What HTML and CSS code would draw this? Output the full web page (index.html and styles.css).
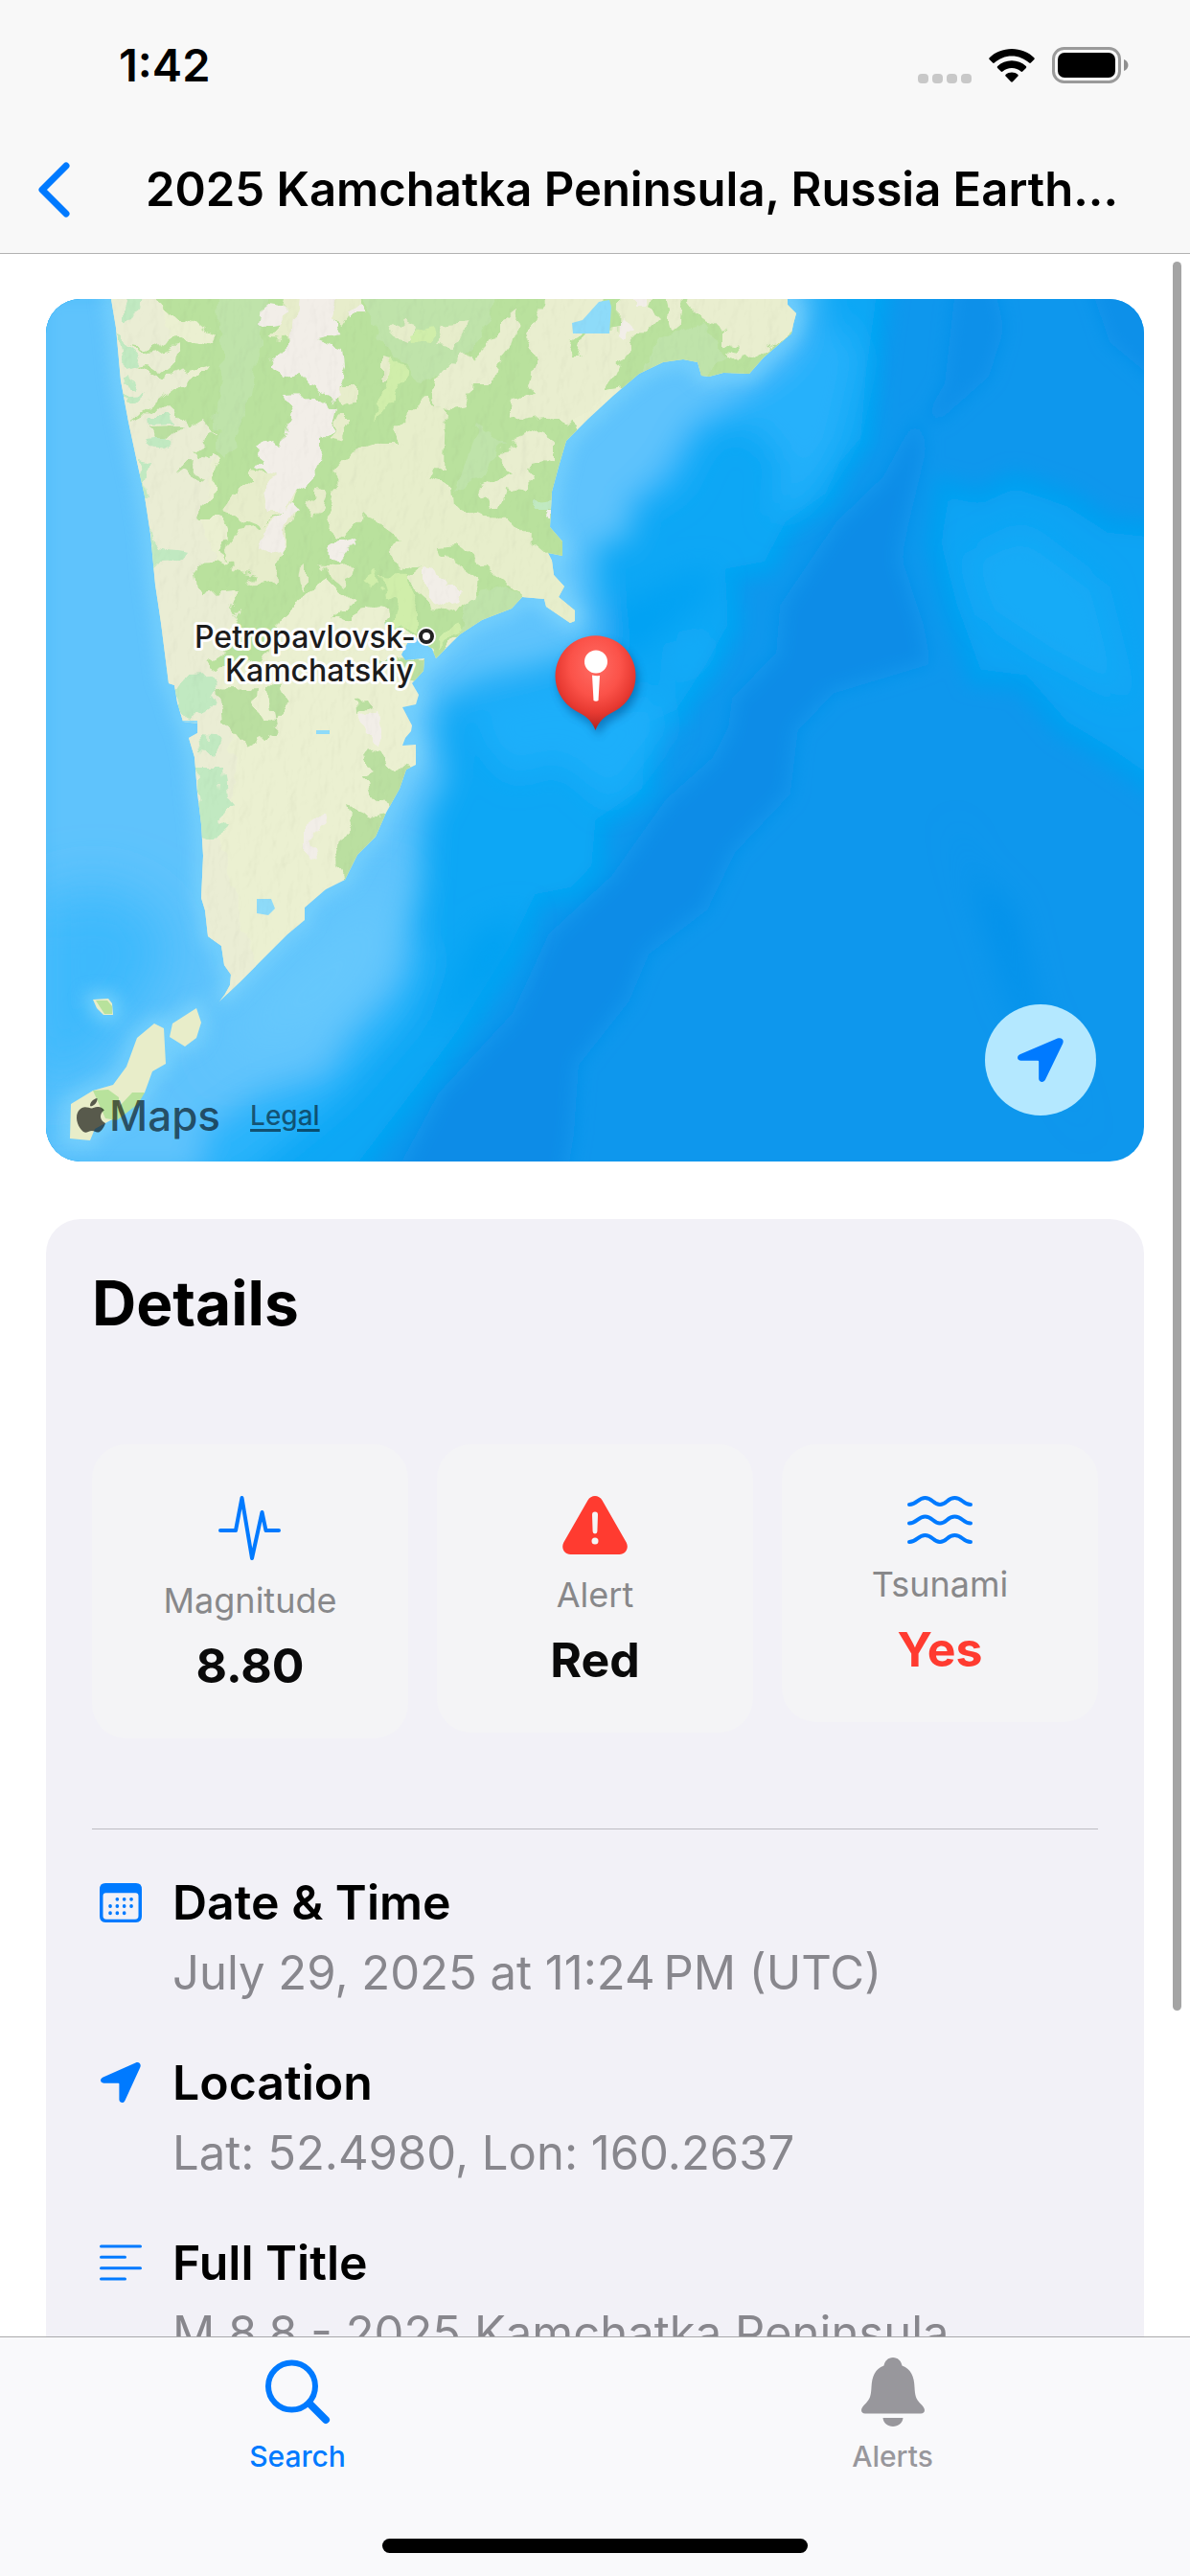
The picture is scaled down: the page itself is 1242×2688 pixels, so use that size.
FILE: index.html
```html
<!DOCTYPE html>
<html lang="en">
<head>
<meta charset="utf-8">
<meta name="viewport" content="width=device-width, initial-scale=1">
<title>2025 Kamchatka Peninsula, Russia Earthquake</title>
<link rel="stylesheet" href="styles.css">
</head>
<body>
<div class="app">
  <header class="top">
    <div class="status">
      <span class="clock">1:42</span>
      <div class="indicators">
        <svg width="56" height="10" viewBox="0 0 56 10" fill="#c8c8c8" aria-hidden="true"><rect width="11" height="10" rx="4"/><rect x="15" width="11" height="10" rx="4"/><rect x="30" width="11" height="10" rx="4"/><rect x="45" width="11" height="10" rx="4"/></svg>
        <svg class="wifi" width="48" height="36" viewBox="0 0 48 36" aria-hidden="true"><path d="M24 0C33 0 41.500 3.500 47.300 9.200c.6.6.6 1.300.1 1.900l-3.500 3.500c-.5.500-1.200.500-1.800 0C37.300 10 31 7.400 24 7.400S10.700 10 5.900 14.600c-.6.500-1.300.500-1.800 0L.6 11.100c-.5-.6-.5-1.300.1-1.900C6.500 3.500 15 0 24 0Z"/><path d="M24 12.300c5.700 0 10.900 2.200 14.800 5.700.6.600.6 1.300.1 1.900l-3.600 3.600c-.5.500-1.200.5-1.800 0-2.500-2.200-5.800-3.600-9.500-3.600s-7 1.400-9.500 3.600c-.6.500-1.300.5-1.800 0l-3.600-3.600c-.5-.6-.5-1.300.1-1.900 3.900-3.500 9.100-5.700 14.800-5.700Z"/><path d="M24 24.400c2.400 0 4.600.9 6.300 2.300.6.500.6 1.300.1 1.900l-5.500 5.700c-.5.600-1.300.6-1.800 0l-5.500-5.700c-.5-.6-.5-1.400.1-1.900 1.700-1.400 3.900-2.300 6.300-2.300Z"/></svg>
        <svg width="80" height="38" viewBox="0 0 80 38" aria-hidden="true"><rect x="1.500" y="1.500" width="69" height="35" rx="11" fill="none" stroke="#9a9a9a" stroke-width="3"/><rect x="6" y="6" width="60" height="26" rx="7"/><path d="M75 13c3 1 4.500 3.500 4.500 6s-1.500 5-4.500 6Z" fill="#8f8f8f"/></svg>
      </div>
    </div>
    <div class="navbar">
      <button class="back" aria-label="Back"><svg width="34" height="58" viewBox="0 0 34 58" fill="none" stroke="#007aff" stroke-width="7" stroke-linecap="round" stroke-linejoin="round" aria-hidden="true"><path d="M30 4 5 29l25 25"/></svg></button>
      <h1>2025 Kamchatka Peninsula, Russia Earth...</h1>
    </div>
  </header>

  <main class="content">
    <section class="map" aria-label="Map">
      <svg class="map-art" viewBox="0 0 1146 900" preserveAspectRatio="xMidYMid slice" aria-hidden="true">
        <defs>
          <filter id="soft" x="-20%" y="-20%" width="140%" height="140%"><feGaussianBlur stdDeviation="9"/></filter>
          <filter id="softer" x="-20%" y="-20%" width="140%" height="140%"><feGaussianBlur stdDeviation="16"/></filter>
          <filter id="wide" x="-40%" y="-40%" width="180%" height="180%"><feGaussianBlur stdDeviation="28"/></filter>
          <filter id="shadow" x="-50%" y="-50%" width="200%" height="200%"><feGaussianBlur stdDeviation="5"/></filter>
          <filter id="ragged" filterUnits="userSpaceOnUse" x="0" y="-20" width="850" height="800">
            <feTurbulence type="fractalNoise" baseFrequency="0.06" numOctaves="2" seed="9" result="n"/>
            <feDisplacementMap in="SourceGraphic" in2="n" scale="20" xChannelSelector="R" yChannelSelector="G"/>
          </filter>
          <filter id="relief" x="0" y="0" width="100%" height="100%">
            <feTurbulence type="fractalNoise" baseFrequency="0.07 0.04" numOctaves="3" seed="4" result="n"/>
            <feDiffuseLighting in="n" surfaceScale="3" diffuseConstant="1.100" lighting-color="#fff" result="l"><feDistantLight azimuth="215" elevation="62"/></feDiffuseLighting>
          </filter>
          <radialGradient id="pinfill" cx="0.5" cy="0.320" r="0.700"><stop offset="0" stop-color="#ff6c64"/><stop offset="0.450" stop-color="#fb5249"/><stop offset="0.700" stop-color="#e83a32"/><stop offset="1" stop-color="#ab201e"/></radialGradient>
          <path id="landshape" d="M68-20V0l5 30 5 55 8 43 9 42 8 36 6 39 5 53 6 40 8 63 6 2 3 18 6 20 15 2v10l-9 5 6 20 3 37 4 33 2 33-2 44 4 13 3 27 14 10 3 20 7 10-1 11-5 9-6 8 21-20 20-20 30-30 18-15v-13l22-19 20-10 13-26 19-19 11-25 14-25 7-20 10-5v-21l-14 1 3-8 6-7 1-6-10-19 14-3 3-10-7-12 12-13 1-13-20 2-4-6 11-21 21 15 4 10 25-25 23-15 31-12 11-12 23 2 2 8 25 17 5-2v-11l-17-14 6-11-11-12-2-15-4-8 15 3v-15l-13-15 2-37 7-26 8-27 23-23 26-24 27-23 25-12 21-3 15 3 4 14 8 1 15-4 27 1 15-17 29-25 2-10 3-11-9-9-1-26Z"/>
          <path id="isles" d="M157 740l5 15-5 16-12 9-16-10 3-14ZM113 756l10 5 2 37-14 8-8 22-19 20-33 18-5 12-21-2 1-36 23-14 21-6 14-19 11-30ZM49 731l16-1 4 5 1 12H60l-7-7Z"/>
          <clipPath id="landclip"><use href="#landshape"/></clipPath>
        </defs>
        <rect width="1146" height="900" fill="#0e97ed"/>
        <g filter="url(#soft)">
          <path d="M-20-20H877L864 75 858 148 835 175 820 208 778 238 755 281 717 288 720 341 694 388 663 435 634 448 630 515 581 548 577 595 552 621 516 628 490 681 436 768 394 825 321 920H-20Z" fill="#0fa7f5" stroke="#00a1f1" stroke-width="16"/>
          <path d="M935 195 973 205 1011 188 1069 208 1111 235 1170 241V520L1105 475 1060 448 1019 401 969 395 942 321 925 255Z" fill="#0ba4f4" stroke="#039eef" stroke-width="18"/>
          <path d="M908 131 915 155 896 235 889 271 912 341 919 378 820 408 781 448 773 515 716 575 687 635 626 681 605 731 552 798 547 871 539 920H365L413 831 490 748 528 665 593 605 650 525 699 481 716 448 720 418 766 371 770 321 797 281 828 235 877 188Z" fill="#0d8ce7" stroke="#0c93ea" stroke-width="8"/>
          <path d="M950-20H988L1000 31 984 81 931 128 919 121 938 88ZM1088-20H1170V95L1110 45Z" fill="#0b90e9"/>
        </g>
        <g filter="url(#softer)">
          <path d="M960 270 1020 240 1100 300 1130 420 1040 370 980 330Z" fill="#12abf7"/>
          <path d="M945 540 970 600 1010 640 1030 730 1090 880 1050 790 1010 740 985 660Z" fill="#0491ea"/>
          <path d="M600 90 750 70 830 20 850 60 830 150 790 210 760 230 770 170 735 130 690 140 660 200 600 230Z" fill="#27b1fb"/>
          <path d="M440 420 540 400 600 420 640 410 650 450 590 530 560 500 530 480 490 500 460 470Z" fill="#1eaffa"/>
          <path d="M580 330 690 280 700 300 640 350 610 380 590 360Z" fill="#04a1f3"/>
          <path d="M660 360 700 350 680 380 650 400Z" fill="#1caefa"/>
          <path d="M450 660 500 640 480 700 440 740 400 770Z" fill="#00a1f2"/>
          <path d="M300 760 390 660 400 690 380 750 310 830 200 920H130L200 820Z" fill="#2cb4fb"/>
          <path d="M-20-20H810L795 31 770 65 710 108 672 128 645 175 620 200 605 210 612 250 572 255 575 321 580 365 512 385 451 398 409 421 409 468 417 498 394 541 390 615 375 661 359 715 310 765 292 805 222 825 164 865 157 920H-20Z" fill="#5fc3fc"/>
        </g>
        <g filter="url(#wide)">
          <path d="M-20 630 60 610 120 640 130 700 80 760 30 820-20 820Z" fill="#3db9fc"/>
          <path d="M280 680 360 600 360 680 290 760 180 800 220 730Z" fill="#67c9fc"/>
        </g>
        <g filter="url(#soft)" fill="none" stroke="#86d9fd" stroke-width="14" opacity="0.700"><use href="#landshape"/><use href="#isles"/></g>
        <use href="#landshape" fill="#e9eecb"/>
        <g clip-path="url(#landclip)">
          <g filter="url(#ragged)">
            <path fill="#eaedd4" d="M60 0H115L180 150 160 230 200 330 180 400 200 480 180 560 230 730H150Z"/>
            <path fill="#b9e19d" d="M111-20V0L128 16 176 38 172 47 135 37 107 53 88 49 107 57 139 47 137 66 122 78 106 68 90 70 122 82 172 68 162 81 134 91 88 126 107 116 137 115 149 135 164 126 176 141 155 155 160 170 174 158 181 165 174 185 176 201 158 218 160 230 185 230 191 248 180 262 191 270 180 275 155 276 160 310 183 308 202 306 193 321 202 338 208 351 190 365 166 376 180 385 229 375 245 338 264 308 294 293 321 316 298 331 321 341 336 321 356 325 359 341 382 350 407 375 432 350 470 340 560 300 552 100 620 90 800 100V-20Z"/>
            <path fill="#bfe3aa" d="M180-20H235L215 100 190 170 176 150 184 80ZM320-20H480L440 60 390 90 350 40ZM450 130 480 150 455 190 430 200ZM620 80 640 40 690 25 707 60 690 80ZM440 310 480 300 500 315 430 355Z"/>
            <path fill="#e7eecb" d="M298 188 321 161 352 151 369 151 365 131 398 101 417 118 415 175 401 188 426 196 428 218 455 230 486 231 509 255 528 271 552 301 560 350 522 335 493 308 455 275 440 262 428 253 411 255 413 266 432 278 451 293 447 315 424 331 405 321 375 293 394 278 371 283 359 271 371 253 334 226 306 251 292 238 300 205Z"/>
            <path fill="#e9eecf" d="M493 10 474 25V41L459 45 447 66 434 56 415 72 401 90 413 116 438 111 443 91 465 91 470 68 486 48ZM535-20 501 38 511 61 505 88 511 100 490 105 482 128 520 121 547 131 566 121 585 95 594 76 602 58 640 18 630 8 641-20ZM644-20V0L653 33 663 25 666-20ZM671-20V0L686 21 707 30V60L724 66 743 60 780 30 800-20ZM490 145 507 138 530 151V170L501 178 507 195 501 201 480 198 474 218H461L453 198 486 181 472 168Z"/>
            <path fill="#e7edcb" d="M214 178V190L187 211 189 223 222 236 256 215 260 198 237 182ZM202 240 222 236 260 218 250 255 237 295 212 300 218 285 191 281 189 261ZM306 90H323V107L308 112ZM306 122 318 122 308 148 295 145ZM292 200 284 230 276 214 282 198ZM250-20H340L308 28 275 10 262 45 232 38 245 22ZM359 31 372 22 388 33 380 47 368 42ZM412 28 438 25 430 42 422 50 406 48ZM350 61 363 63V88H350ZM285 280 322 275 320 292 310 297 298 288ZM256 290 270 278V302Z"/>
            <path fill="#d0eeaa" d="M363 61 377 78 365 95 359 115 342 125 348 105 356 91ZM350 288 375 290 388 321V348L363 341 369 315 354 308ZM331 293 345 285 349 300 338 305ZM411 350 428 338 432 348 407 365ZM382 37 404 30 400 42 384 44Z"/>
            <path fill="#b8e29c" d="M548 40 562 32 555 60 545 60ZM576 36 585-20H600L598 32ZM707 47 724 52 720 57 707 54Z"/>
            <path fill="#f2eee8" d="M266-20H313L298 21 308 38 285 43 306 51 308 71 305 80 312 98 302 108 271 91 269 76 246 81 233 68 256 48 260 21ZM246 101 277 100 302 115 298 138 287 145V158L275 198 260 195 248 221H229L225 198 242 185 218 175 229 160 223 151 235 146 245 156 254 118ZM252 216 262 221 250 235 246 268 223 255 225 243ZM227 8 250 12 245 24 224 28ZM313 12 325 3 333 10 318 20ZM396 278 413 288 417 300H434L430 318 419 320 396 305ZM292 265 310 253 325 251 324 258 312 263 304 275ZM325 436 346 431 352 455 346 465ZM271 545 287 536 289 548 279 561 283 585 271 578ZM598 27 604 24 613 33 606 42 598 39ZM613-20H627V7H613ZM518 222 528 222V230Z"/>
            <path fill="#c1e9c1" d="M80 12 95-20H114L92 20 80 22ZM75 33 80 35 86 52 97 57 94 68 80 72 77 50ZM82 76 96 86 92 90 80 84ZM80 100 105 99 92 110 84 110ZM107 123H135L136 130 108 131ZM105 142 118 140 130 150 120 156 108 153ZM96 168 110 171 104 188 108 206 100 206ZM108 240 116 260 146 265 138 275 111 277ZM147 393 171 392 180 407 165 431 150 437 140 425 135 408ZM160 458 181 460 176 476 162 474ZM155 489H183L186 518 195 528 181 545 187 551 178 565 160 561ZM512 210 528 208V221H508Z"/>
            <path fill="#badfa0" d="M108 133 140 132 137 143 112 141ZM136 180 148 166 166 187ZM180 408 220 405 218 425 225 436 237 438 229 406 246 405 256 425 237 438 239 451 210 468 185 438ZM338 468 365 488 390 491 380 511 365 538 352 520 336 518 331 498 344 491 329 481ZM315 528 344 541 370 536 354 561 335 580 320 615 310 610 302 585 310 558 321 548ZM321 420 333 419 338 427 322 435ZM345 377 395 378 390 400 360 390Z"/>
          </g>
          <path fill="#8edbf9" d="M577 3 588 1 590 8 588 36H550L549 25 560 22ZM220 626H235L239 636 232 643 220 641ZM282 450H296V454H282ZM140 440H158V453H150Z"/>
          <rect width="800" height="740" filter="url(#relief)" opacity="0.130" style="mix-blend-mode:multiply"/>
        </g>
        <use href="#isles" fill="#e8edc9"/>
        <path fill="#b8e29c" d="M49 826 65 825 76 833V843L90 828H103L96 840 74 857 62 855ZM52 732H64L69 738V746H61Z"/>
        <g class="place">
          <text x="155" y="364">Petropavlovsk-</text>
          <text x="187" y="399">Kamchatskiy</text>
        </g>
        <circle cx="397" cy="352" r="8" fill="#fff" stroke="#fff" stroke-width="4"/>
        <circle cx="397" cy="352" r="6" fill="#fff" stroke="#222" stroke-width="4"/>
        <path d="M573.500 450C570 441 565 436 556 431.500A42 42 0 1 1 591 431.500C582 436 577 441 573.500 450Z" transform="translate(3 6)" fill="#003a78" opacity="0.450" filter="url(#shadow)"/>
        <path d="M573.500 450C570 441 565 436 556 431.500A42 42 0 1 1 591 431.500C582 436 577 441 573.500 450Z" fill="url(#pinfill)"/>
        <circle cx="574" cy="378.500" r="12" fill="#fff"/>
        <path d="M570 392.500q4 1 8 .500l-1.500 26q-2.500 1.500-5 0Z" fill="#fff"/>
      </svg>
      <div class="attribution">
        <span class="brand"><svg width="30" height="37" viewBox="0 0 30 37" aria-hidden="true"><path d="M21.500 0c.3 4.500-3.500 8.600-7.400 8.300C13.600 4.200 17.700.400 21.500 0ZM15.600 10.500c1.500 0 3.800-1.800 6.900-1.500 2.600.1 4.900 1.300 6.300 3.400-5.600 3.700-4.700 11 1.200 13.500-1.500 4.500-4.700 9.600-8.100 9.700-2.400 0-3.200-1.500-6-1.500s-3.700 1.500-6 1.600C5.500 35.800 0 27.500 0 20.400 0 13.300 4.400 9.400 8.800 9.300c2.900 0 5.300 1.200 6.800 1.200Z"/></svg>Maps</span>
        <a href="#legal">Legal</a>
      </div>
      <button class="locate" aria-label="Center on epicenter"><svg width="48" height="48" viewBox="0 0 42 40" fill="#007aff" aria-hidden="true"><path d="M36.500.4c3.500-1.300 6.300 1 4.800 4.700L25.400 38c-1.500 3.200-6 2.400-6-1V21.500c0-.6-.3-.9-.9-.9H3.300c-3.800 0-4.400-4-1.200-5.600Z"/></svg></button>
    </section>

    <section class="details">
      <h2>Details</h2>
      <div class="stats">
        <div class="stat">
          <svg width="66" height="67" viewBox="0 0 66 67" fill="none" stroke="#007aff" stroke-width="4" stroke-linecap="round" stroke-linejoin="round" aria-hidden="true"><path d="M2 36H18L24.500 2 35 65 45.500 17 49.500 36H63"/></svg>
          <span class="stat-label">Magnitude</span>
          <strong>8.80</strong>
        </div>
        <div class="stat">
          <svg width="68" height="61" viewBox="0 0 68 61" aria-hidden="true"><path d="M26.500 4.500c3.300-6 11.700-6 15 0l25.200 44c3 5.700-.5 12.500-7.200 12.500h-51c-6.700 0-10.200-6.800-7.200-12.500Z" fill="#ff3b30"/><path d="M31 19.500a3 3 0 0 1 6 0l-.6 17.500a2.400 2.400 0 0 1-4.800 0Z" fill="#f4f4f5"/><circle cx="34" cy="47" r="3.500" fill="#f4f4f5"/></svg>
          <span class="stat-label">Alert</span>
          <strong>Red</strong>
        </div>
        <div class="stat">
          <svg width="68" height="50" viewBox="0 0 68 50" fill="none" stroke="#007aff" stroke-width="4" stroke-linecap="round" aria-hidden="true"><path id="wave" d="M2 9C10 9 11 2 18.500 2S27 9 34 9 41.500 2 49.500 2 58 9 66 9"/><use href="#wave" y="19.500"/><use href="#wave" y="39"/></svg>
          <span class="stat-label">Tsunami</span>
          <strong class="alarm">Yes</strong>
        </div>
      </div>
      <hr>
      <dl class="facts">
        <div class="fact">
          <svg width="44" height="41" viewBox="0 0 44 38" preserveAspectRatio="none" fill="#007aff" aria-hidden="true"><path fill-rule="evenodd" d="M6 0H38q6 0 6 6V32q0 6-6 6H6q-6 0-6-6V6Q0 0 6 0ZM6.500 9.500Q3.500 9.500 3.500 12.500V31.500Q3.500 35 7 35H37Q40.500 35 40.500 31.500V12.500Q40.500 9.500 37.500 9.500Z"/><path d="M11 29h.1M18.300 29h.1M25.600 29h.1M11 22.300h.1M18.300 22.300h.1M25.600 22.300h.1M33 22.300h.1M18.300 15.600h.1M25.600 15.600h.1M33 15.600h.1" stroke="#007aff" stroke-width="3.600" stroke-linecap="round"/></svg>
          <dt>Date &amp; Time</dt>
          <dd>July 29, 2025 at 11:24&#8239;PM (UTC)</dd>
        </div>
        <div class="fact">
          <svg width="42" height="42" viewBox="0 0 42 40" preserveAspectRatio="none" fill="#007aff" aria-hidden="true"><path d="M36.500.4c3.500-1.300 6.300 1 4.800 4.700L25.400 38c-1.500 3.200-6 2.400-6-1V21.500c0-.6-.3-.9-.9-.9H3.300c-3.800 0-4.400-4-1.200-5.600Z"/></svg>
          <dt>Location</dt>
          <dd>Lat: 52.4980, Lon: 160.2637</dd>
        </div>
        <div class="fact">
          <svg width="44" height="38" viewBox="0 0 44 38" stroke="#007aff" stroke-width="3" stroke-linecap="round" aria-hidden="true"><path d="M1.500 2H42.500M1.500 13.300H26.500M1.500 24.700H42.500M1.500 36H26.500"/></svg>
          <dt>Full Title</dt>
          <dd>M 8.8 - 2025 Kamchatka Peninsula</dd>
        </div>
      </dl>
    </section>
    <div class="scroll-thumb"></div>
  </main>

  <footer class="bottom">
    <nav class="tabs">
      <a class="tab active" href="#search"><svg width="68" height="74" viewBox="0 0 68 74" fill="none" stroke="currentColor" aria-hidden="true"><circle cx="27.500" cy="31" r="24.500" stroke-width="6"/><path d="M46 49 63 66" stroke-width="8" stroke-linecap="round"/></svg>Search</a>
      <a class="tab" href="#alerts"><svg width="66" height="74" viewBox="0 0 66 74" fill="currentColor" aria-hidden="true"><path d="M33 1C28 1 24.500 4.500 23.500 9.500 14 13 11 21 10.500 32 10 41 9 44 5 48.500 1.500 52 0 54 0 56c0 2 1.500 3.500 4 3.500H62c2.500 0 4-1.500 4-3.500 0-2-1.500-4-5-7.500C57 44 56 41 55.500 32 55 21 52 13 42.500 9.500 41.500 4.500 38 1 33 1ZM22.500 64h21C43 69.500 38.500 73 33 73S23 69.500 22.500 64Z"/></svg>Alerts</a>
    </nav>
    <div class="home-indicator"></div>
  </footer>
</div>
</body>
</html>
```

FILE: styles.css
```css
* { box-sizing: border-box; }

body {
  margin: 0;
  background: #fff;
  color: #000;
  font-family: Inter, "Liberation Sans", sans-serif;
}

h1, h2, dl, dt, dd { margin: 0; }

button {
  padding: 0;
  border: 0;
  background: none;
}

svg { display: block; flex: none; }

.app {
  display: flex;
  flex-direction: column;
  height: 100vh;
}

/* Status bar and navigation */
.top {
  flex: none;
  background: #f8f8f8;
  border-bottom: 1px solid #b2b2b2;
}

.status {
  display: flex;
  align-items: center;
  justify-content: space-between;
  height: 132px;
  padding: 4px 64px 0 124px;
}

.clock {
  font-size: 47px;
  font-weight: 600;
  line-height: 60px;
}

.indicators {
  display: flex;
  align-items: flex-end;
  gap: 18px;
}

.navbar {
  display: flex;
  align-items: center;
  height: 132px;
  padding: 0 72px 0 39px;
}

.back {
  flex: none;
  width: 110px;
}

h1 {
  flex: 1;
  overflow: hidden;
  font-size: 49px;
  font-weight: 600;
  line-height: 60px;
  text-align: center;
  white-space: nowrap;
}

/* Scrolling content */
.content {
  position: relative;
  display: flex;
  flex: 1;
  flex-direction: column;
  gap: 60px;
  min-height: 0;
  overflow: hidden;
  padding: 47px 48px 0;
}

.scroll-thumb {
  position: absolute;
  top: 8px;
  right: 9px;
  width: 9px;
  height: 84%;
  border-radius: 5px;
  background: #a4a4a4;
}

.map {
  position: relative;
  flex: none;
  height: 900px;
  overflow: hidden;
  border-radius: 36px;
}

.map-art {
  width: 100%;
  height: 100%;
}

.place {
  fill: #1c1c1c;
  stroke: #fffffff0;
  stroke-width: 6px;
  stroke-linejoin: round;
  paint-order: stroke;
  font-size: 32px;
  font-weight: 500;
}

.attribution {
  position: absolute;
  bottom: 20px;
  left: 32px;
  display: flex;
  align-items: center;
  gap: 31px;
  color: rgba(0, 0, 0, 0.62);
}

.brand {
  display: flex;
  align-items: center;
  gap: 4px;
  font-size: 44px;
  font-weight: 500;
  line-height: 56px;
}

.brand svg {
  fill: currentColor;
}

.attribution a {
  color: rgba(0, 0, 0, 0.55);
  font-size: 28px;
  font-weight: 500;
  text-decoration-thickness: 3px;
  text-underline-offset: 4px;
}

.locate {
  position: absolute;
  right: 50px;
  bottom: 48px;
  display: grid;
  place-items: center;
  width: 116px;
  height: 116px;
  border-radius: 50%;
  background: #b4e8ff;
}

/* Details card */
.details {
  flex: none;
  padding: 48px 48px 60px;
  border-radius: 36px;
  background: #f2f1f7;
}

h2 {
  font-size: 64px;
  font-weight: 700;
  line-height: 80px;
}

.stats {
  display: grid;
  grid-template-columns: repeat(3, 1fr);
  align-items: start;
  gap: 30px;
  padding-top: 107px;
}

.stat {
  display: flex;
  flex-direction: column;
  align-items: center;
  padding: 54px 24px 46px;
  border-radius: 36px;
  background: #f4f4f6;
}

.stat-label {
  margin: 18px 0 14px;
  color: #88888a;
  font-size: 36px;
  line-height: 48px;
}

strong {
  color: #0a0a0a;
  font-size: 50px;
  font-weight: 700;
  line-height: 60px;
}

.alarm { color: #ff3b30; }

hr {
  height: 1px;
  margin: 94px 0 46px;
  border: 0;
  background: #bdbcc2;
}

.facts {
  display: flex;
  flex-direction: column;
  gap: 54px;
}

.fact {
  display: grid;
  grid-template-columns: 60px 1fr;
  align-items: center;
  column-gap: 24px;
  row-gap: 14px;
  font-size: 49px;
  line-height: 60px;
}

.fact svg { justify-self: center; }

dt {
  font-size: 50px;
  font-weight: 600;
}

dd {
  grid-column: 2;
  color: #88878d;
}

/* Tab bar */
.bottom {
  flex: none;
  height: 250px;
  background: #f9f9fb;
  border-top: 1px solid #a9a9ab;
}

.tabs {
  display: flex;
  height: 210px;
  padding-top: 20px;
}

.tab {
  display: flex;
  flex: 1;
  flex-direction: column;
  align-items: center;
  gap: 12px;
  color: #98979c;
  font-size: 30px;
  font-weight: 500;
  line-height: 36px;
  text-decoration: none;
}

.tab.active { color: #007aff; }

.home-indicator {
  width: 444px;
  max-width: 60%;
  height: 15px;
  margin: 0 auto;
  border-radius: 8px;
  background: #000;
}
```
